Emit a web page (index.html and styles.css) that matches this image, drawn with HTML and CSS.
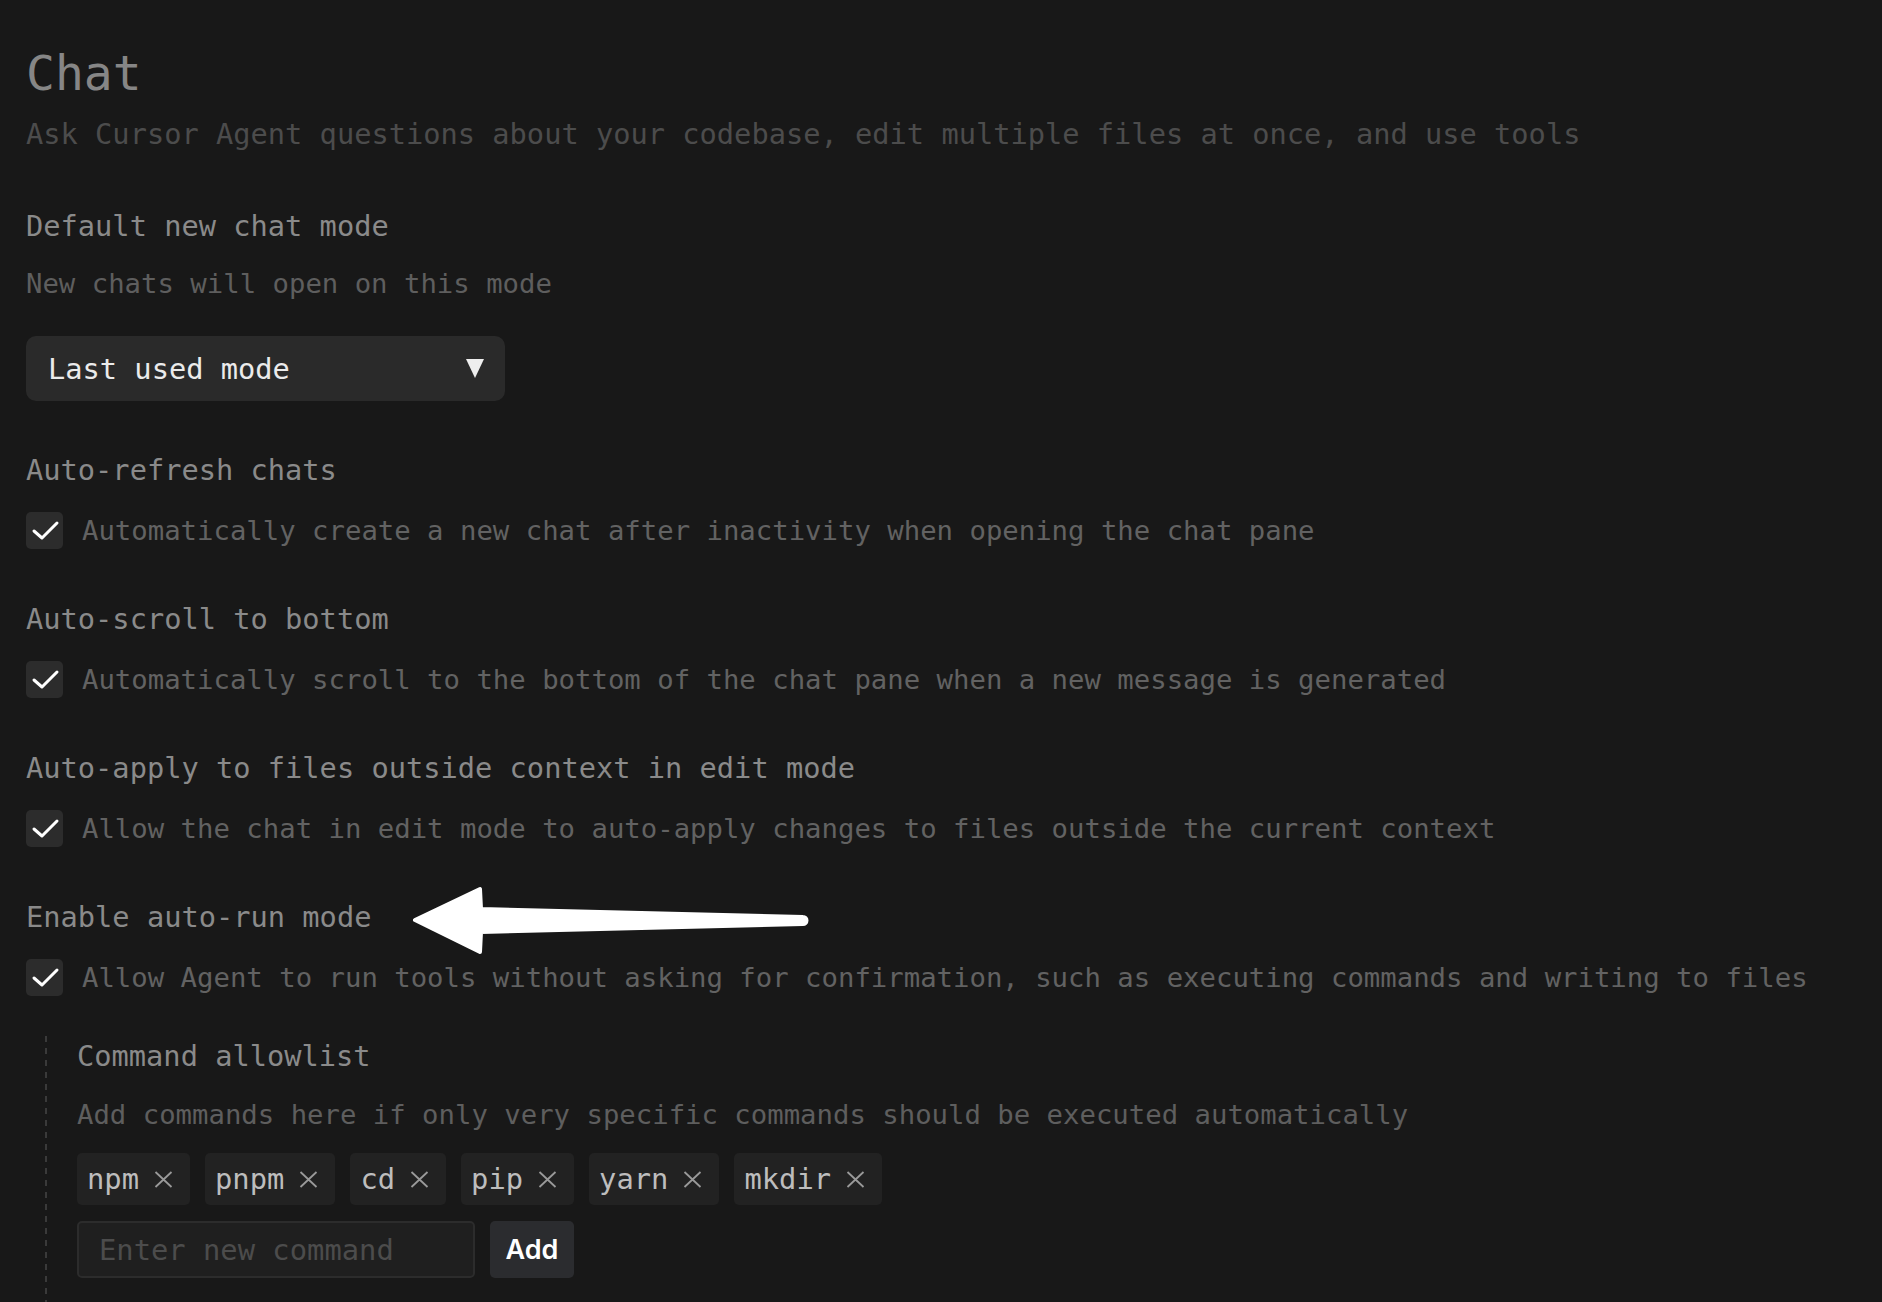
FILE: index.html
```html
<!DOCTYPE html>
<html lang="en">
<head>
<meta charset="utf-8">
<title>Chat settings</title>
<link rel="stylesheet" href="styles.css">
</head>
<body>
<main class="page">
  <h1 class="title">Chat</h1>
  <p class="subtitle">Ask Cursor Agent questions about your codebase, edit multiple files at once, and use tools</p>

  <section class="setting setting-first">
    <h2 class="setting-label">Default new chat mode</h2>
    <p class="setting-desc">New chats will open on this mode</p>
    <div class="select">
      <span class="select-value">Last used mode</span>
      <svg class="select-caret" width="18" height="19" viewBox="0 0 18 19"><polygon points="0,0 18,0 9,19" fill="#eeeeee"/></svg>
    </div>
  </section>

  <section class="setting">
    <h2 class="setting-label">Auto-refresh chats</h2>
    <div class="check-row">
      <span class="checkbox"><svg width="37" height="37" viewBox="0 0 37 37"><polyline points="8,19 16,26 31,11" fill="none" stroke="#ffffff" stroke-width="3" stroke-linecap="round" stroke-linejoin="round"/></svg></span>
      <span class="check-text">Automatically create a new chat after inactivity when opening the chat pane</span>
    </div>
  </section>

  <section class="setting">
    <h2 class="setting-label">Auto-scroll to bottom</h2>
    <div class="check-row">
      <span class="checkbox"><svg width="37" height="37" viewBox="0 0 37 37"><polyline points="8,19 16,26 31,11" fill="none" stroke="#ffffff" stroke-width="3" stroke-linecap="round" stroke-linejoin="round"/></svg></span>
      <span class="check-text">Automatically scroll to the bottom of the chat pane when a new message is generated</span>
    </div>
  </section>

  <section class="setting">
    <h2 class="setting-label">Auto-apply to files outside context in edit mode</h2>
    <div class="check-row">
      <span class="checkbox"><svg width="37" height="37" viewBox="0 0 37 37"><polyline points="8,19 16,26 31,11" fill="none" stroke="#ffffff" stroke-width="3" stroke-linecap="round" stroke-linejoin="round"/></svg></span>
      <span class="check-text">Allow the chat in edit mode to auto-apply changes to files outside the current context</span>
    </div>
  </section>

  <section class="setting">
    <h2 class="setting-label setting-label-arrow">Enable auto-run mode
      <svg class="arrow" width="420" height="100" viewBox="0 0 420 100"><path d="M15 49 L80 18 L81 38 L403 46 A3.5 3.5 0 0 1 403 53 L81 61 L80 81 Z" fill="#ffffff" stroke="#ffffff" stroke-width="4" stroke-linejoin="round"/></svg>
    </h2>
    <div class="check-row">
      <span class="checkbox"><svg width="37" height="37" viewBox="0 0 37 37"><polyline points="8,19 16,26 31,11" fill="none" stroke="#ffffff" stroke-width="3" stroke-linecap="round" stroke-linejoin="round"/></svg></span>
      <span class="check-text">Allow Agent to run tools without asking for confirmation, such as executing commands and writing to files</span>
    </div>

    <div class="nested">
      <h2 class="setting-label">Command allowlist</h2>
      <p class="setting-desc">Add commands here if only very specific commands should be executed automatically</p>
      <div class="tags">
        <span class="tag">npm<svg class="tag-x" width="19" height="17" viewBox="0 0 19 17"><path d="M1.5 1 L17.5 16 M17.5 1 L1.5 16" stroke="#9a9a9a" stroke-width="1.8" fill="none"/></svg></span>
        <span class="tag">pnpm<svg class="tag-x" width="19" height="17" viewBox="0 0 19 17"><path d="M1.5 1 L17.5 16 M17.5 1 L1.5 16" stroke="#9a9a9a" stroke-width="1.8" fill="none"/></svg></span>
        <span class="tag">cd<svg class="tag-x" width="19" height="17" viewBox="0 0 19 17"><path d="M1.5 1 L17.5 16 M17.5 1 L1.5 16" stroke="#9a9a9a" stroke-width="1.8" fill="none"/></svg></span>
        <span class="tag">pip<svg class="tag-x" width="19" height="17" viewBox="0 0 19 17"><path d="M1.5 1 L17.5 16 M17.5 1 L1.5 16" stroke="#9a9a9a" stroke-width="1.8" fill="none"/></svg></span>
        <span class="tag">yarn<svg class="tag-x" width="19" height="17" viewBox="0 0 19 17"><path d="M1.5 1 L17.5 16 M17.5 1 L1.5 16" stroke="#9a9a9a" stroke-width="1.8" fill="none"/></svg></span>
        <span class="tag">mkdir<svg class="tag-x" width="19" height="17" viewBox="0 0 19 17"><path d="M1.5 1 L17.5 16 M17.5 1 L1.5 16" stroke="#9a9a9a" stroke-width="1.8" fill="none"/></svg></span>
      </div>
      <div class="add-row">
        <input class="cmd-input" type="text" placeholder="Enter new command">
        <button class="add-btn" type="button">Add</button>
      </div>
    </div>
  </section>
</main>
</body>
</html>
```

FILE: styles.css
```css
html, body {
  margin: 0;
  padding: 0;
  background: #181818;
}

body {
  font-family: "DejaVu Sans Mono", "Liberation Mono", monospace;
  font-size: 28.7px;
  color: #8a8a8a;
  overflow: hidden;
}

.page {
  padding: 44px 0 0 26px;
}

.title {
  margin: 0;
  font-size: 48px;
  line-height: 58px;
  font-weight: normal;
  color: #868686;
}

.subtitle {
  margin: 12px 0 0;
  line-height: 40px;
  color: #4c4c4c;
}

.setting {
  margin-top: 49px;
}

.setting-first {
  margin-top: 52px;
}

.setting-label {
  margin: 0;
  font-size: 28.7px;
  line-height: 40px;
  font-weight: normal;
  color: #8a8a8a;
}

.setting-label-arrow {
  position: relative;
}

.arrow {
  position: absolute;
  left: 374px;
  top: -26px;
}

.setting-desc {
  margin: 18px 0 0;
  font-size: 27.3px;
  line-height: 40px;
  color: #5e5e5e;
}

.select {
  margin-top: 32px;
  width: 479px;
  height: 65px;
  box-sizing: border-box;
  padding: 0 21px 0 22px;
  background: #2a2a2a;
  border-radius: 10px;
  display: flex;
  align-items: center;
  justify-content: space-between;
}

.select-value {
  color: #ebebeb;
}

.select-caret {
  display: block;
}

.check-row {
  margin-top: 20px;
  height: 40px;
  display: flex;
  align-items: center;
  gap: 19px;
}

.checkbox {
  width: 37px;
  height: 37px;
  flex: none;
  background: #2c2c2c;
  border-radius: 5px;
  display: flex;
}

.check-text {
  font-size: 27.3px;
  color: #626262;
  white-space: nowrap;
}

.nested {
  margin: 39px 0 0 18px;
  padding: 0 0 40px 33px;
  background-image: repeating-linear-gradient(to bottom, #3a3a3a 0 6px, transparent 6px 12px);
  background-size: 2px 100%;
  background-repeat: no-repeat;
  background-position: 1px 0;
}

.nested .setting-desc {
  margin-top: 19px;
}

.tags {
  margin-top: 18px;
  display: flex;
  gap: 15px;
}

.tag {
  height: 52px;
  box-sizing: border-box;
  padding: 0 17px 0 10px;
  background: #222222;
  border-radius: 5px;
  display: flex;
  align-items: center;
  gap: 15px;
  color: #bdbdbd;
  font-size: 28.8px;
}

.tag-x {
  display: block;
}

.add-row {
  margin-top: 16px;
  display: flex;
  gap: 15px;
}

.cmd-input {
  width: 398px;
  height: 57px;
  box-sizing: border-box;
  margin: 0;
  padding: 0 20px;
  background: #1f1f1f;
  border: 2px solid #2c2c2c;
  border-radius: 5px;
  font-family: "DejaVu Sans Mono", "Liberation Mono", monospace;
  font-size: 28.8px;
  color: #bdbdbd;
  outline: none;
}

.cmd-input::placeholder {
  color: #4c4c4c;
}

.add-btn {
  width: 84px;
  height: 57px;
  margin: 0;
  padding: 0;
  border: none;
  border-radius: 5px;
  background: #2b2c2f;
  color: #ffffff;
  font-family: "Inter", "Noto Sans", sans-serif;
  font-weight: 600;
  font-size: 27px;
}
```
